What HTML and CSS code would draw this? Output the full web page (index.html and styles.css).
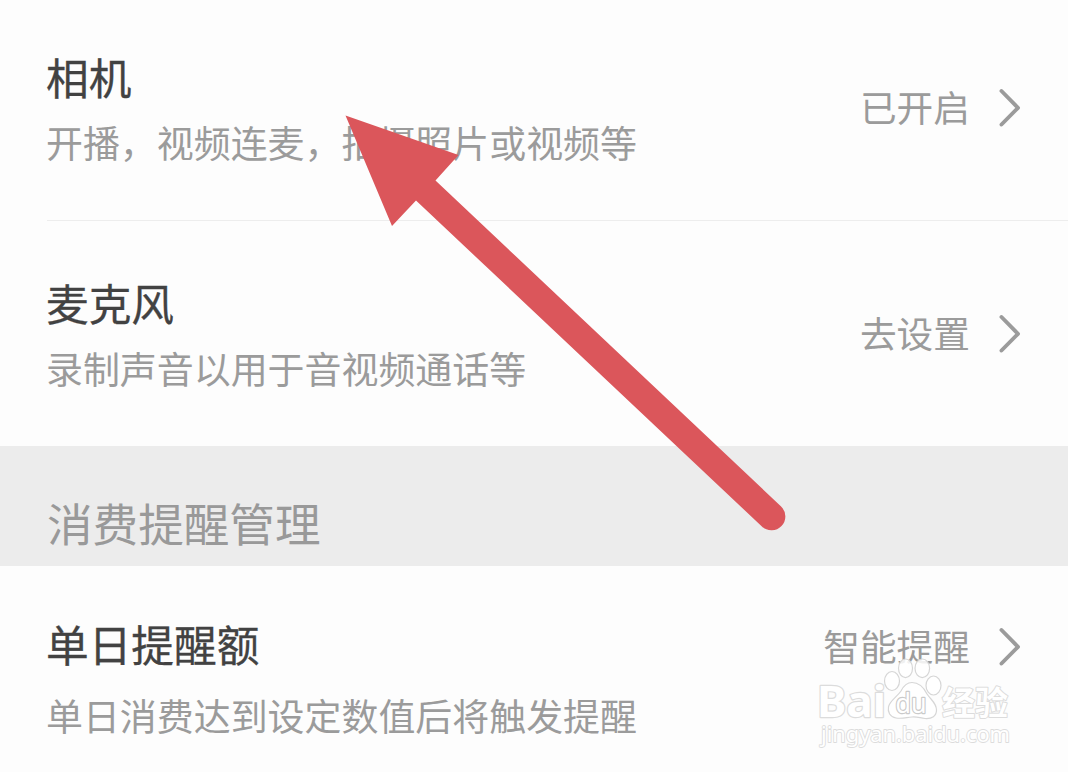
FILE: index.html
```html
<!DOCTYPE html>
<html lang="zh-CN">
<head>
<meta charset="utf-8">
<title>权限设置</title>
<link rel="stylesheet" href="styles.css">
</head>
<body>
<main class="page">
  <section class="row row-camera">
    <div class="info"><h2 class="title">相机</h2><p class="desc">开播，视频连麦，拍摄照片或视频等</p></div>
    <div class="action"><span class="value">已开启</span><svg class="chevron" viewBox="0 0 22 40"><path d="M2.500 3 19 19.800 2.500 36.500"/></svg></div>
  </section>
  <div class="divider"></div>
  <section class="row row-mic">
    <div class="info"><h2 class="title">麦克风</h2><p class="desc">录制声音以用于音视频通话等</p></div>
    <div class="action"><span class="value">去设置</span><svg class="chevron" viewBox="0 0 22 40"><path d="M2.500 3 19 19.800 2.500 36.500"/></svg></div>
  </section>
  <h1 class="group">消费提醒管理</h1>
  <section class="row row-limit">
    <div class="info"><h2 class="title">单日提醒额</h2><p class="desc">单日消费达到设定数值后将触发提醒</p></div>
    <div class="action"><span class="value">智能提醒</span><svg class="chevron" viewBox="0 0 22 40"><path d="M2.500 3 19 19.800 2.500 36.500"/></svg></div>
  </section>
  <svg class="arrow" viewBox="0 0 1068 772"><path d="M345.500 115.500 458.500 155 435.500 180.500 781.100 506.500A13.800 13.800 0 0 1 761.900 526.500L416 200.500 392 226Z"/></svg>
  <svg class="watermark" viewBox="0 0 210 100">
    <text class="wm-brand" x="-1" y="66.500" textLength="69" lengthAdjust="spacingAndGlyphs">Bai</text>
    <g class="paw">
      <ellipse cx="74" cy="31" rx="7.500" ry="9.500"/>
      <ellipse cx="87.500" cy="18.300" rx="7" ry="9.300"/>
      <ellipse cx="104.300" cy="18.300" rx="7.300" ry="9.300"/>
      <ellipse cx="115.500" cy="35.500" rx="7.500" ry="9.500"/>
      <path d="M94 32.500C102 32.500 106 38 109 44C113 50 118.500 53 118.500 60C118.500 66 114 69 107 68.500C102 68 99 66.500 94 67C88 67.500 84 69 78 68C72 67 69.500 62 70.500 57C71.500 51 79 47 83 41C86 35 89 32.500 94 32.500Z"/>
    </g>
    <text class="wm-du" x="77.500" y="62.500" textLength="31" lengthAdjust="spacingAndGlyphs">du</text>
    <text class="wm-cn" x="124" y="64.500" textLength="66" lengthAdjust="spacingAndGlyphs">经验</text>
    <text class="wm-url" x="3" y="92" textLength="189" lengthAdjust="spacingAndGlyphs">jingyan.baidu.com</text>
  </svg>
</main>
</body>
</html>
```
FILE: styles.css
```css
body {
  margin: 0;
  background: #fdfdfd;
  font-family: "Noto Sans CJK SC", sans-serif;
}
.page {
  position: relative;
  width: 1068px;
  height: 772px;
  overflow: hidden;
}
.row {
  box-sizing: border-box;
  display: flex;
  justify-content: space-between;
  align-items: flex-start;
  padding: 46px 47px 0 46px;
}
.row-camera { height: 220px; }
.row-mic { height: 225px; padding-top: 51px; }
.row-limit { height: 206px; padding-top: 47px; }
.divider { height: 1px; margin-left: 47px; background: #ededed; }
.info { display: flex; flex-direction: column; gap: 6px; }
.row-limit .info { gap: 12px; }
.title, .desc, .group { margin: 0; font-weight: 400; white-space: nowrap; }
.title { font-size: 42.700px; line-height: 60px; color: #424242; -webkit-text-stroke: 0.300px #424242; }
.desc { font-size: 36.950px; line-height: 60px; color: #9b9b9b; }
.action { display: flex; align-items: center; gap: 29px; height: 60px; margin-top: 32px; }
.row-limit .action { margin-top: 4px; }
.value { padding-bottom: 4px; font-size: 36.700px; line-height: 56px; color: #9b9b9b; }
.chevron { width: 22px; height: 40px; fill: none; stroke: #9b9b9b; stroke-width: 3.900; stroke-linecap: round; stroke-linejoin: round; }
.group {
  box-sizing: border-box;
  height: 120px;
  padding: 46px 0 0 47px;
  background: #ececec;
  color: #999;
  font-size: 45.600px;
  line-height: 60px;
}
.arrow { position: absolute; inset: 0; width: 1068px; height: 772px; fill: #db565b; }
.watermark { position: absolute; left: 818px; top: 650px; width: 210px; height: 100px; fill: #fff; stroke: #dcdcdc; stroke-width: 2.400; paint-order: stroke fill; stroke-linejoin: round; }
.paw { stroke: #d6d6d6; stroke-width: 1.200; paint-order: normal; }
.paw ellipse { fill: #fff; fill-opacity: 0.85; }
.wm-brand { font: 700 43px "Noto Sans", sans-serif; }
.wm-du { font: 400 27px "Noto Sans", sans-serif; stroke: #cacaca; }
.wm-cn { font: 700 33px "Noto Sans CJK SC", sans-serif; stroke-width: 2; }
.wm-url { font: 400 22px "Noto Sans", sans-serif; stroke-width: 1.800; }
```
